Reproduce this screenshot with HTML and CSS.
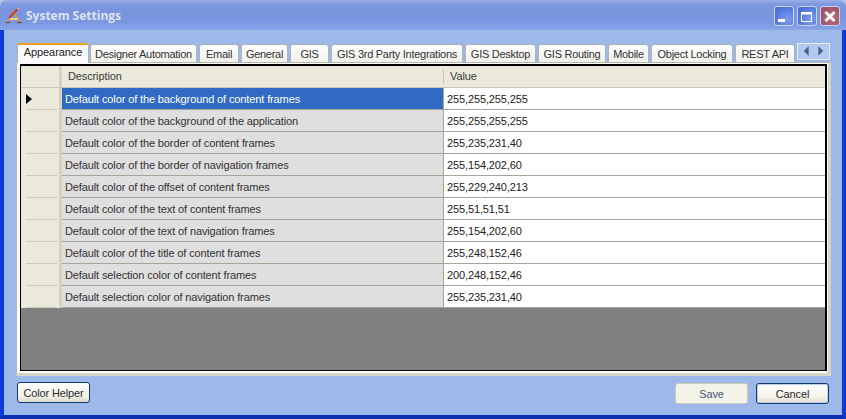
FILE: index.html
```html
<!DOCTYPE html>
<html lang="en">
<head>
<meta charset="utf-8">
<title>System Settings</title>
<link rel="stylesheet" href="styles.css">
</head>
<body>
<div class="window">
  <header class="titlebar">
    <svg class="app-icon" width="18" height="18" viewBox="0 0 18 18">
      <path d="M2.5 15 L8.5 5 L14.5 15" fill="none" stroke="#d99a3c" stroke-width="1.6"/>
      <path d="M4.5 12 H12.5" stroke="#f2cf78" stroke-width="1.8"/>
      <path d="M1 15.5 H5 M12 15.5 H16.5" stroke="#6b5a42" stroke-width="1.3"/>
      <path d="M4 11 L12.5 2" stroke="#c33f3a" stroke-width="2.2"/>
      <path d="M12.5 2 L13.5 1" stroke="#f0d0b0" stroke-width="1.6"/>
    </svg>
    <span class="title">System Settings</span>
    <div class="caption-buttons">
      <div class="cap cap-blue">
        <svg width="20" height="20" viewBox="0 0 20 20"><rect x="4" y="13" width="7" height="3" fill="#fff"/></svg>
      </div>
      <div class="cap cap-blue">
        <svg width="20" height="20" viewBox="0 0 20 20"><path d="M4.5 6.5 H14.5 V15.5 H4.5 Z" fill="none" stroke="#fff"/><rect x="4" y="6" width="11" height="2.5" fill="#fff"/></svg>
      </div>
      <div class="cap cap-red">
        <svg width="20" height="20" viewBox="0 0 20 20"><path d="M5.5 6 L14.5 15 M14.5 6 L5.5 15" stroke="#fff" stroke-width="3"/></svg>
      </div>
    </div>
  </header>
  <div class="client">
    <div class="tabstrip">
      <div class="tab active t1">Appearance</div>
      <div class="tab t2">Designer Automation</div>
      <div class="tab t3">Email</div>
      <div class="tab t4">General</div>
      <div class="tab t5">GIS</div>
      <div class="tab t6">GIS 3rd Party Integrations</div>
      <div class="tab t7">GIS Desktop</div>
      <div class="tab t8">GIS Routing</div>
      <div class="tab t9">Mobile</div>
      <div class="tab t10">Object Locking</div>
      <div class="tab t11">REST API</div>
      <div class="tab-scroll">
        <svg width="33" height="16" viewBox="0 0 33 16">
          <path d="M12 3 L7 8 L12 13 Z" fill="#4a5f85"/>
          <path d="M22 3 L27 8 L22 13 Z" fill="#4a5f85"/>
        </svg>
      </div>
    </div>
    <div class="tabpage">
      <div class="grid">
        <div class="row head">
          <div class="rowhead"></div>
          <div class="cell desc"><span class="headlabel">Description</span></div>
          <div class="cell val"><span class="headlabel">Value</span></div>
        </div>
        <div class="row selected">
          <div class="rowhead"><svg width="6" height="10" viewBox="0 0 6 10"><path d="M0 0 L6 5 L0 10 Z" fill="#000"/></svg></div>
          <div class="cell desc">Default color of the background of content frames</div>
          <div class="cell val">255,255,255,255</div>
        </div>
        <div class="row"><div class="rowhead"></div><div class="cell desc">Default color of the background of the application</div><div class="cell val">255,255,255,255</div></div>
        <div class="row"><div class="rowhead"></div><div class="cell desc">Default color of the border of content frames</div><div class="cell val">255,235,231,40</div></div>
        <div class="row"><div class="rowhead"></div><div class="cell desc">Default color of the border of navigation frames</div><div class="cell val">255,154,202,60</div></div>
        <div class="row"><div class="rowhead"></div><div class="cell desc">Default color of the offset of content frames</div><div class="cell val">255,229,240,213</div></div>
        <div class="row"><div class="rowhead"></div><div class="cell desc">Default color of the text of content frames</div><div class="cell val">255,51,51,51</div></div>
        <div class="row"><div class="rowhead"></div><div class="cell desc">Default color of the text of navigation frames</div><div class="cell val">255,154,202,60</div></div>
        <div class="row"><div class="rowhead"></div><div class="cell desc">Default color of the title of content frames</div><div class="cell val">255,248,152,46</div></div>
        <div class="row"><div class="rowhead"></div><div class="cell desc">Default selection color of content frames</div><div class="cell val">200,248,152,46</div></div>
        <div class="row"><div class="rowhead"></div><div class="cell desc">Default selection color of navigation frames</div><div class="cell val">255,235,231,40</div></div>
      </div>
    </div>
    <div class="footer">
      <button class="btn">Color Helper</button>
      <div class="footer-right">
        <button class="btn disabled">Save</button>
        <button class="btn default">Cancel</button>
      </div>
    </div>
  </div>
</div>
</body>
</html>
```
FILE: styles.css
```css
* { box-sizing: border-box; }
html, body { margin: 0; padding: 0; }
body {
  width: 846px;
  height: 419px;
  overflow: hidden;
  background: #b8c4e0;
  font-family: "Liberation Sans", Arial, sans-serif;
  font-size: 11px;
  color: #000;
}
.window {
  width: 846px;
  height: 419px;
  display: flex;
  flex-direction: column;
  border-radius: 7px 7px 0 0;
  overflow: hidden;
  background: #9db9ea;
}
.titlebar {
  height: 30px;
  flex: none;
  display: flex;
  align-items: center;
  padding: 0 6px 0 5px;
  background: linear-gradient(to bottom, #9aaee6 0, #7e9ae0 4px, #7a94de 12px, #7c97e2 22px, #84a1e6 28px, #8aa6e8 30px);
}
.app-icon { flex: none; margin-top: 1px; }
.title {
  margin-left: 3px;
  font-family: "Open Sans", sans-serif;
  font-weight: 700;
  font-size: 12px;
  color: #dbe2f6;
}
.caption-buttons {
  margin-left: auto;
  display: flex;
  gap: 3px;
  margin-top: 2px;
}
.cap {
  width: 20px;
  height: 20px;
  border: 1px solid #c8d4f2;
  border-radius: 3px;
  overflow: hidden;
}
.cap svg { display: block; margin: -1px; }
.cap-blue { background: radial-gradient(circle at 70% 70%, #7f9df0, #4a6fd8 80%); }
.cap-red { background: radial-gradient(circle at 60% 60%, #b8707e, #a0505f 80%); }
.client {
  flex: 1;
  display: flex;
  flex-direction: column;
  border-left: 4px solid #0a3ad8;
  border-right: 4px solid #0a3ad8;
  border-bottom: 4px solid #0a2fb0;
  padding: 13px 12px 0 12px;
  background: #9db9ea;
}
.tabstrip {
  position: relative;
  height: 19px;
  flex: none;
  display: flex;
  align-items: flex-end;
  z-index: 1;
}
.tab {
  flex: none;
  height: 18px;
  margin-right: 2px;
  background: linear-gradient(to bottom, #fff, #f1f0ea);
  border: 1px solid #a9b4bd;
  border-bottom: none;
  border-radius: 3px 3px 0 0;
  text-align: center;
  line-height: 18px;
  white-space: nowrap;
  letter-spacing: -0.28px;
  color: #333;
}
.tab.active {
  height: 20px;
  margin-bottom: -1px;
  margin-right: 1px;
  background: #fcfcfe;
  border-top: 2px solid #f0a020;
  line-height: 15px;
  color: #222;
  letter-spacing: -0.1px;
}
.t1 { width: 72px; margin-left: 1px; }
.t2 { width: 107px; }
.t3 { width: 40px; }
.t4 { width: 47px; }
.t5 { width: 39px; }
.t6 { width: 132px; }
.t7 { width: 71px; }
.t8 { width: 68px; }
.t9 { width: 41px; }
.t10 { width: 82px; }
.t11 { width: 60px; }
.tab-scroll {
  flex: none;
  width: 33px;
  height: 17px;
  margin-bottom: 2px;
  background: #b3c8f0;
  border: 1px solid #e4ebfa;
  display: flex;
}
.tab-scroll svg { display: block; margin: -1px 0 0 -1px; }
.tabpage {
  width: 815px;
  height: 314px;
  flex: none;
  background: #fcfcfe;
  border: 1px solid #b5b8a8;
  border-right: 3px solid #d8d5c5;
  border-bottom: 3px solid #d8d5c5;
  padding: 1px 0 0 3px;
}
.grid {
  width: 807px;
  height: 307px;
  border: 1px solid #000;
  border-top-width: 2px;
  border-right-width: 2px;
  background: #808080;
}
.row {
  display: flex;
  height: 22px;
}
.row.head {
  background: #ebe9dc;
  border-bottom: 1px solid #c9c6b6;
}
.rowhead {
  width: 41px;
  flex: none;
  background: linear-gradient(#cfccbc, #cfccbc) 5px 100% / 31px 1px no-repeat, #ebe9dc;
  border-right: 3px solid #d4d1c1;
  display: flex;
  align-items: center;
  padding-left: 5px;
}
.head .rowhead { background: #ebe9dc; }
.cell {
  flex: none;
  line-height: 23px;
  padding-left: 4px;
  white-space: nowrap;
  overflow: hidden;
  letter-spacing: -0.12px;
  border-bottom: 1px solid #a8a598;
  color: #222;
}
.cell.desc {
  width: 382px;
  padding-left: 3px;
  background: #dfdfdf;
  color: #333;
  border-right: 1px solid #a8a598;
}
.cell.val {
  width: 381px;
  padding-left: 3px;
  background: #fff;
}
.head .cell {
  background: #ebe9dc;
  color: #3c3c3c;
  border-bottom: none;
  padding-left: 6px;
  margin: 3px 0;
  line-height: 15px;
  height: 15px;
}
.head .cell.desc { border-right: 1px solid #c9c6b6; }
.selected .cell.desc {
  background: #316ac5;
  color: #fff;
}
.footer {
  display: flex;
  justify-content: space-between;
  padding: 6px 1px 0 1px;
}
.footer-right {
  display: flex;
  gap: 8px;
  margin-top: 1px;
}
.btn {
  width: 73px;
  height: 21px;
  padding: 0;
  font: inherit;
  letter-spacing: -0.15px;
  color: #2a2a2a;
  border: 1px solid #0f3b72;
  border-radius: 3px;
  background: linear-gradient(to bottom, #fff, #f3f2ea 70%, #dcd8c8);
}
.btn.disabled {
  color: #4a5472;
  border-color: #cdcab8;
  background: #f4f3ea;
}
.btn.default {
  box-shadow: inset 0 0 0 1px #bcd0ee;
}
```
